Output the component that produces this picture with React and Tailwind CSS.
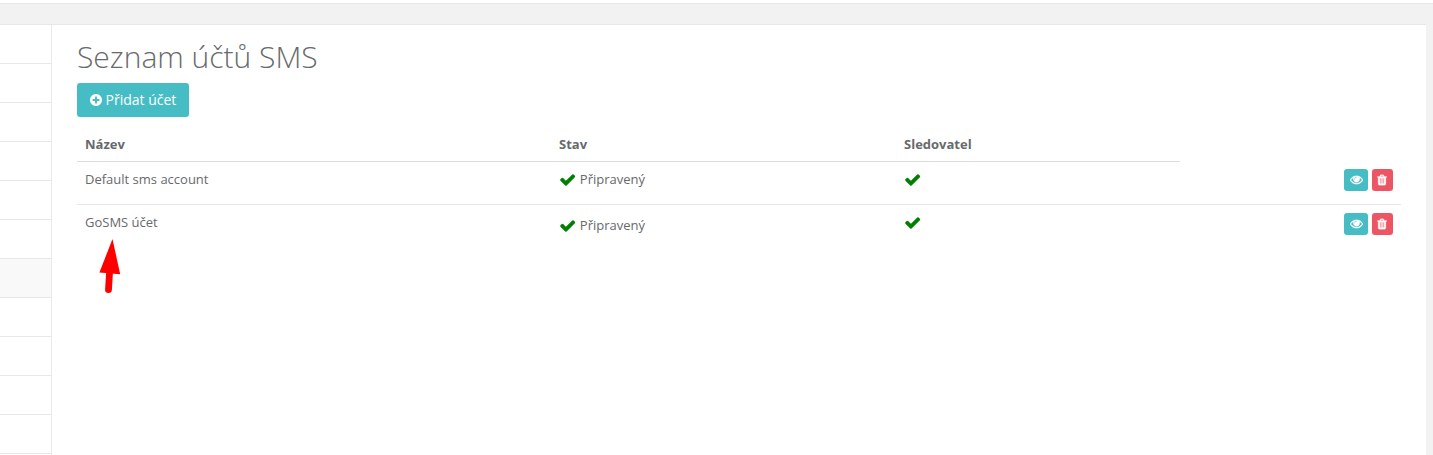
const ICONS = {
  plus: "M1344 960v-128q0-26-19-45t-45-19h-256v-256q0-26-19-45t-45-19h-128q-26 0-45 19t-19 45v256h-256q-26 0-45 19t-19 45v128q0 26 19 45t45 19h256v256q0 26 19 45t45 19h128q26 0 45-19t19-45v-256h256q26 0 45-19t19-45zm320-64q0 209-103 385.5t-279.5 279.5-385.5 103-385.5-103-279.5-279.5-103-385.5 103-385.5 279.5-279.5 385.5-103 385.5 103 279.5 279.5 103 385.5z",
  check:
    "M1671 566q0 40-28 68l-724 724-136 136q-28 28-68 28t-68-28l-136-136-362-362q-28-28-28-68t28-68l136-136q28-28 68-28t68 28l294 295 656-657q28-28 68-28t68 28l136 136q28 28 28 68z",
  eye: "M1664 960q-152-236-381-353 61 104 61 225 0 185-131.5 316.5t-316.5 131.5-316.5-131.5-131.5-316.5q0-121 61-225-229 117-381 353 133 205 333.5 326.5t434.5 121.5 434.5-121.5 333.5-326.5zm-720-384q0-20-14-34t-34-14q-125 0-214.5 89.5t-89.5 214.5q0 20 14 34t34 14 34-14 14-34q0-86 61-147t147-61q20 0 34-14t14-34zm848 384q0 34-20 69-140 230-376.5 368.5t-499.5 138.5-499.5-139-376.5-368q-20-35-20-69t20-69q140-229 376.5-368t499.5-139 499.5 139 376.5 368q20 35 20 69z",
  trash:
    "M704 1376v-704q0-14-9-23t-23-9h-64q-14 0-23 9t-9 23v704q0 14 9 23t23 9h64q14 0 23-9t9-23zm256 0v-704q0-14-9-23t-23-9h-64q-14 0-23 9t-9 23v704q0 14 9 23t23 9h64q14 0 23-9t9-23zm256 0v-704q0-14-9-23t-23-9h-64q-14 0-23 9t-9 23v704q0 14 9 23t23 9h64q14 0 23-9t9-23zm-544-992h448l-48-117q-7-9-17-11h-317q-10 2-17 11zm928 32v64q0 14-9 23t-23 9h-96v948q0 83-47 143.5t-113 60.5h-832q-66 0-113-58.5t-47-141.5v-952h-96q-14 0-23-9t-9-23v-64q0-14 9-23t23-9h309l70-167q15-37 54-63t79-26h320q40 0 79 26t54 63l70 167h309q14 0 23 9t9 23z",
};

const Icon = ({ name, className }) => (
  <svg viewBox="0 0 1792 1792" fill="currentColor" className={className} aria-hidden="true">
    <path d={ICONS[name]} />
  </svg>
);

const ACTIVE_ITEM = 6;

const Sidebar = () => (
  <nav className="w-[52px] shrink-0 border-r border-[#eaeaea] bg-white">
    {Array.from({ length: 11 }).map((_, index) => (
      <div
        key={index}
        className={`h-[39px] border-b border-[#e7e7e7] ${index === ACTIVE_ITEM ? "bg-[#f9f9f9]" : ""}`}
      />
    ))}
  </nav>
);

const RowActions = () => (
  <div className="flex justify-end gap-1 pr-2">
    <button
      aria-label="Zobrazit"
      className="flex h-[22px] w-6 items-center justify-center rounded-[3px] bg-[#46bdc4] pb-px text-white"
    >
      <Icon name="eye" className="size-[13px] stroke-white stroke-[40]" />
    </button>
    <button
      aria-label="Smazat"
      className="flex h-[22px] w-[21px] items-center justify-center rounded-[3px] bg-[#ed5565] pr-px text-white"
    >
      <Icon name="trash" className="size-3 stroke-white stroke-[40]" />
    </button>
  </div>
);

const COLUMNS = "grid grid-cols-[474px_345px_284px_221px]";

const AccountsTable = () => (
  <div className="mt-2.5 w-[1324px] text-[13px] leading-[18px]">
    {/* Header */}
    <div className={`${COLUMNS} h-[35px] font-bold`}>
      <div className="border-b border-[#ddd] px-2 pt-2">Název</div>
      <div className="border-b border-[#ddd] px-2 pt-2">Stav</div>
      <div className="border-b border-[#ddd] px-2 pt-2">Sledovatel</div>
    </div>

    {/* Default account */}
    <div className={`${COLUMNS} h-[42px] pt-[7px]`}>
      <div className="px-2 pt-px">Default sms account</div>
      <div className="flex items-start gap-[3.5px] px-2 pt-px">
        <Icon name="check" className="mt-px size-[17.33px] text-[green]" />
        <span>Připravený</span>
      </div>
      <div className="px-2 pt-0.5">
        <Icon name="check" className="size-[17.33px] text-[green]" />
      </div>
      <RowActions />
    </div>

    {/* GoSMS account */}
    <div className={`${COLUMNS} h-[46px] border-t border-[#e7e7e7] pt-2`}>
      <div className="relative px-2">
        GoSMS účet
        <svg
          viewBox="0 0 22 55"
          className="absolute top-[26px] left-[22px] h-[55px] w-[22px]"
          aria-hidden="true"
        >
          <path d="M13.5 0 21.2 35.3 0.4 33.5z" fill="#f00" />
          <path d="M10.7 31 9.5 50.6" stroke="#f00" strokeWidth="6.8" strokeLinecap="round" />
        </svg>
      </div>
      <div className="flex items-start gap-[3.5px] px-2 pt-[3px]">
        <Icon name="check" className="mt-px size-[17.33px] text-[green]" />
        <span>Připravený</span>
      </div>
      <div className="px-2 pt-px">
        <Icon name="check" className="size-[17.33px] text-[green]" />
      </div>
      <RowActions />
    </div>
  </div>
);

export default function App() {
  return (
    <div className="flex h-[455px] w-[1433px] flex-col overflow-hidden bg-[#f2f2f2] font-['Open_Sans',sans-serif] text-[#676a6c]">
      <div className="h-1 shrink-0 border-b border-[#e7e7e7] bg-white" />
      <div className="mt-5 mr-[7px] flex flex-1 border-t border-[#e7e7e7] bg-white">
        <Sidebar />
        <main className="pt-[15px] pl-[25px]">
          <h1 className="text-[30px] leading-[33px] font-light">Seznam účtů SMS</h1>
          <button className="mt-2.5 flex h-[34px] w-28 items-center gap-[2.5px] rounded-[3px] bg-[#46bdc4] pl-3 text-sm text-white">
            <Icon name="plus" className="size-3.5" />
            Přidat účet
          </button>
          <AccountsTable />
        </main>
      </div>
    </div>
  );
}
